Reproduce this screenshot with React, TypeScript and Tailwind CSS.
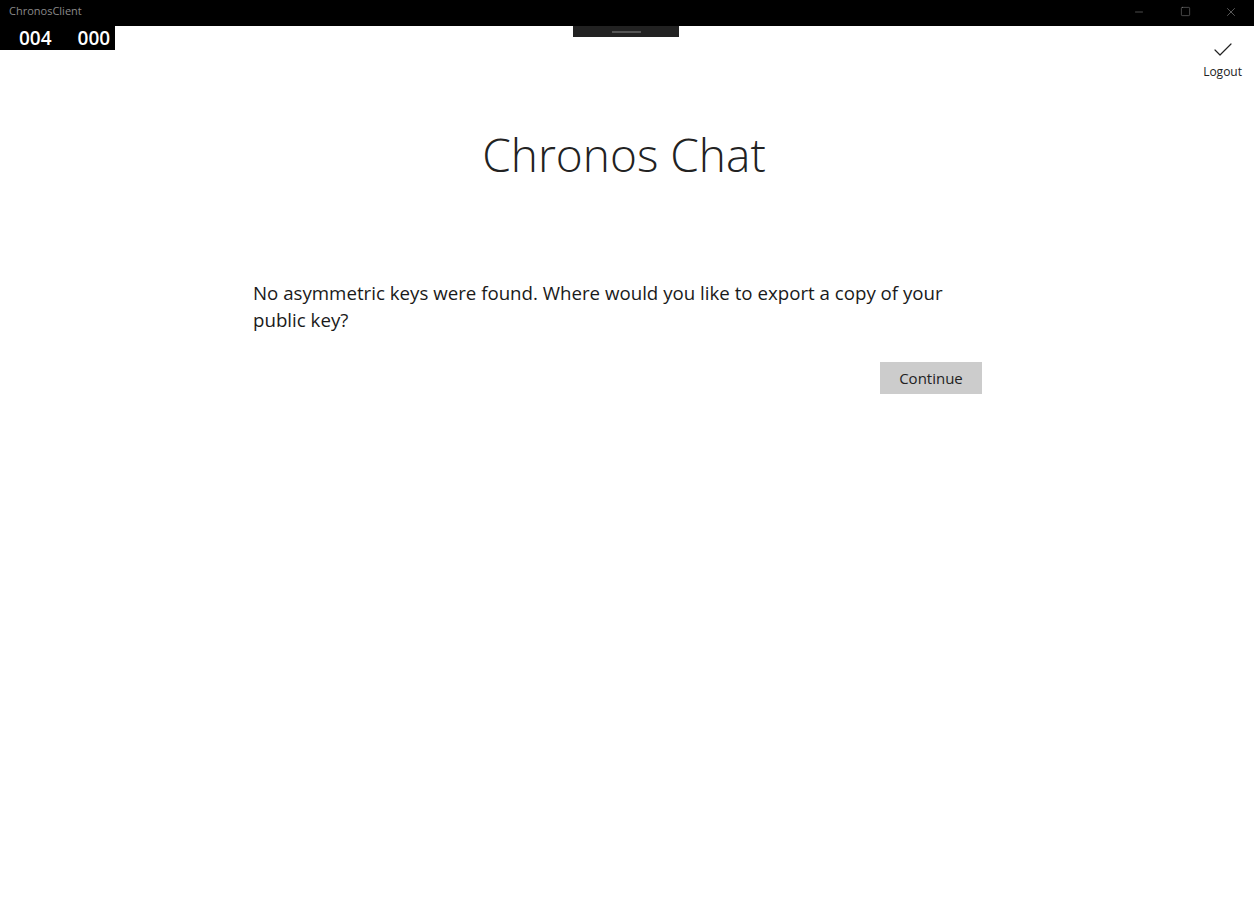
import { Check, Minus, Square, X } from 'lucide-react'

const font = { fontFamily: '"Open Sans", "Noto Sans", sans-serif' }

function TitleBar() {
  return (
    <div className="relative flex h-[26px] items-center bg-black">
      <div className="pb-[3px] pl-[9px] text-[11px] text-[#8a8a8a]">ChronosClient</div>
      <div className="ml-auto flex h-full items-center pb-[3px] text-[#9a9a9a]">
        <div className="flex w-[46px] justify-center">
          <Minus size={12} strokeWidth={1} />
        </div>
        <div className="flex w-[46px] justify-center">
          <Square size={11} strokeWidth={1} />
        </div>
        <div className="flex w-[46px] justify-center">
          <X size={14} strokeWidth={1} />
        </div>
      </div>
      {/* frame counter + drag handle hang below the bar */}
      <div className="absolute left-0 top-[26px] flex h-[24px] w-[115px] items-center gap-[26px] bg-black pl-[19px] text-[19px] font-semibold text-white">
        <span>004</span>
        <span>000</span>
      </div>
      <div className="absolute left-[573px] top-[26px] flex h-[11px] w-[106px] items-center justify-center bg-[#222]">
        <div className="h-[2px] w-[29px] bg-[#555]" />
      </div>
    </div>
  )
}

export default function App() {
  return (
    <div className="flex h-[908px] w-[1254px] flex-col overflow-hidden bg-white" style={font}>
      <TitleBar />
      <div className="flex justify-end pr-[12px] pt-[12px]">
        <div className="flex flex-col items-center text-[#222]">
          <Check size={24} strokeWidth={1.2} />
          <div className="mt-[1px] text-[12px]">Logout</div>
        </div>
      </div>
      <h1 className="mt-[50px] pr-[6px] text-center text-[46px] leading-none font-light text-[#222]">Chronos Chat</h1>
      <div className="ml-[253px] mt-[102px] w-[729px]">
        <p className="text-[18.7px] leading-[27px] text-[#1a1a1a]">
          No asymmetric keys were found. Where would you like to export a copy of your public key?
        </p>
        <div className="mt-[29px] flex justify-end">
          <button className="h-[32px] w-[102px] bg-[#cccccc] text-[15px] text-[#222]">Continue</button>
        </div>
      </div>
    </div>
  )
}
